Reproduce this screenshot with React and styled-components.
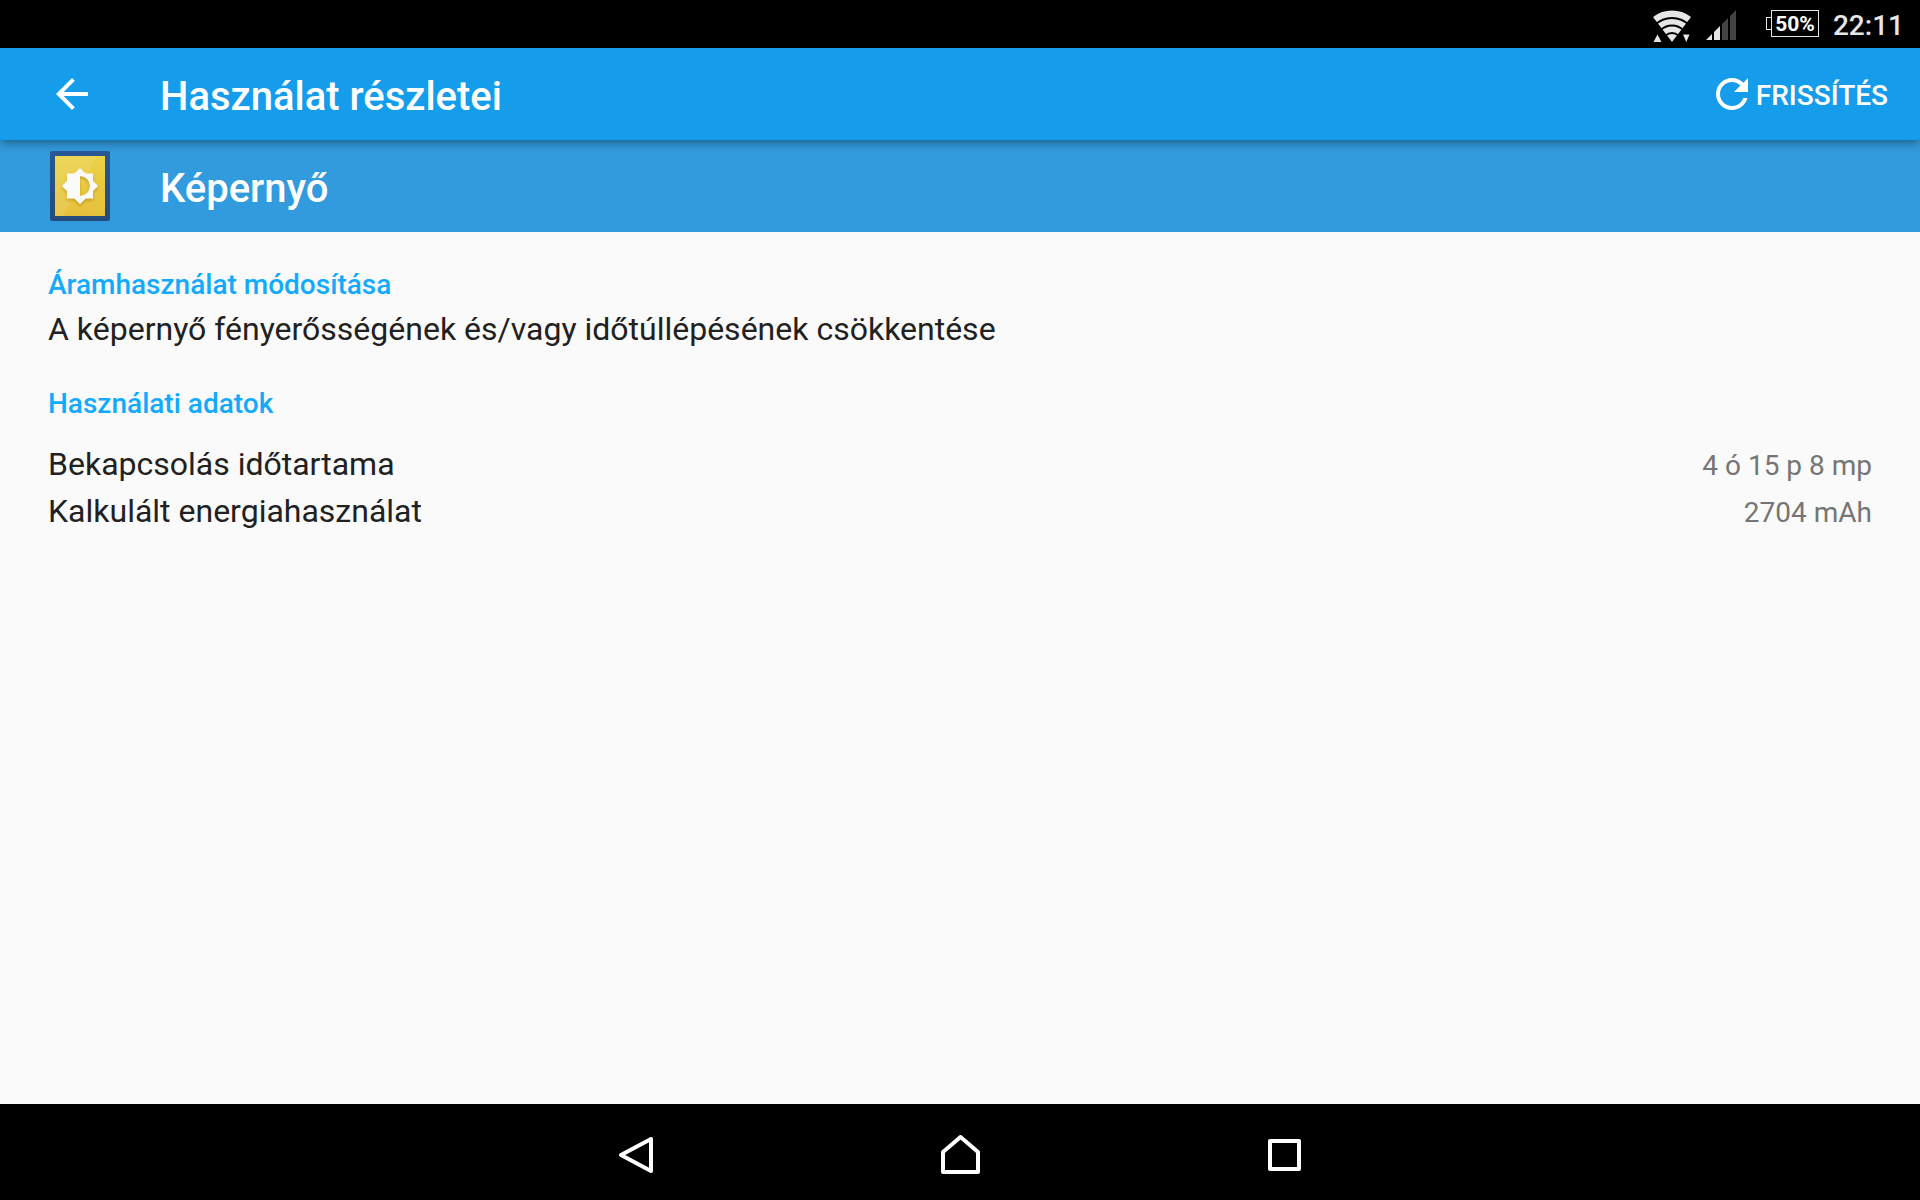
import styled, { createGlobalStyle } from "styled-components";

const GlobalStyle = createGlobalStyle`
  * {
    box-sizing: border-box;
  }
  body {
    margin: 0;
    background-color: #fafafa;
    font-family: Roboto, "Noto Sans", sans-serif;
  }
  h1, h2, h3, p, dl, dt, dd {
    margin: 0;
  }
`;

const Container = styled.div`
  display: flex;
  flex-direction: column;
  min-height: 100vh;
`;

const StatusBar = styled.div`
  display: flex;
  align-items: center;
  justify-content: flex-end;
  height: 48px;
  padding: 2px 16px 0 0;
  background-color: #000;
  color: #e6e6e6;
`;

const StatusIcon = styled.svg`
  display: block;
  margin-right: ${(props) => props.$gap}px;
`;

const Battery = styled.div`
  display: flex;
  align-items: center;
  margin: 0 14px 3px 0;
`;

const BatteryTip = styled.span`
  width: 5px;
  height: 13px;
  border: 1px solid #e6e6e6;
  border-right: none;
`;

const BatteryBody = styled.span`
  width: 48px;
  height: 27px;
  border: 1px solid #e6e6e6;
  color: #fff;
  font-size: 21px;
  font-weight: 700;
  line-height: 26px;
  text-align: center;
`;

const Clock = styled.time`
  padding-top: 2px;
  font-size: 28px;
  font-weight: 500;
  line-height: 32px;
`;

const AppBar = styled.header`
  position: relative;
  display: flex;
  align-items: center;
  height: 92px;
  padding: 0 32px 0 48px;
  background-color: #159dec;
  color: #fff;
  box-shadow: 0 2px 10px rgba(0, 0, 0, 0.45);
`;

const IconButton = styled.button`
  display: flex;
  align-items: center;
  justify-content: center;
  width: 48px;
  height: 48px;
  margin-right: 64px;
  padding: 0;
  border: none;
  background: none;
  color: inherit;
  cursor: pointer;
`;

const Title = styled.h1`
  flex: 1;
  padding-top: 6px;
  font-size: 40px;
  font-weight: 500;
  line-height: 48px;
`;

const RefreshButton = styled.button`
  display: flex;
  align-items: center;
  gap: 8px;
  padding: 0;
  border: none;
  background: none;
  color: inherit;
  font-family: inherit;
  font-size: 28px;
  font-weight: 500;
  line-height: 32px;
  cursor: pointer;
`;

const RefreshText = styled.span`
  padding-top: 4px;
`;

const Banner = styled.section`
  display: flex;
  align-items: center;
  gap: 50px;
  height: 92px;
  padding: 0 50px;
  background-color: #329bde;
  color: #fff;
`;

const BannerTitle = styled.h2`
  padding-top: 6px;
  font-size: 40px;
  font-weight: 500;
  line-height: 48px;
`;

const Content = styled.main`
  flex: 1;
  padding: 33px 48px;
`;

const Section = styled.section`
  margin-bottom: 31px;
`;

const SectionTitle = styled.h3`
  color: #12aaff;
  font-size: 28px;
  font-weight: 500;
  line-height: 40px;
`;

const Text = styled.p`
  color: #212121;
  font-size: 32px;
  line-height: 48px;
`;

const Details = styled.dl`
  padding-top: 17px;
`;

const Row = styled.div`
  display: flex;
  align-items: baseline;
  justify-content: space-between;
  line-height: 47px;
`;

const Label = styled.dt`
  color: #212121;
  font-size: 32px;
`;

const Value = styled.dd`
  color: #757575;
  font-size: 28px;
  line-height: 40px;
`;

const NavBar = styled.nav`
  display: flex;
  align-items: center;
  justify-content: center;
  gap: 228px;
  height: 96px;
  padding-top: 6px;
  background-color: #000;
`;

const NavButton = styled.button`
  display: flex;
  align-items: center;
  justify-content: center;
  width: 96px;
  height: 80px;
  padding: 0;
  border: none;
  background: none;
  cursor: pointer;
`;

const WifiIcon = () => (
  <StatusIcon $gap={14} width="40" height="34" viewBox="0 -2 40 34">
    <path d="M1 7A31.400 31.400 0 0 1 39 7L20 32Z" fill="#e6e6e6" />
    <g fill="none" stroke="#000" strokeWidth="2">
      <circle cx="20" cy="32" r="24" />
      <circle cx="20" cy="32" r="16.500" />
      <circle cx="20" cy="32" r="9" />
    </g>
    <path d="M1.500 32L5.500 24.500L9.500 32Z M31 24.500H37.500L34.300 32Z" fill="#e6e6e6" />
  </StatusIcon>
);

const SignalIcon = () => (
  <StatusIcon $gap={30} width="30" height="30" viewBox="0 0 30 30">
    <path d="M0 30L6 24V30Z M8 22L14 16V30H8Z" fill="#e6e6e6" />
    <path d="M16 14L22 8V30H16Z M24 6L30 0V30H24Z" fill="#444" />
  </StatusIcon>
);

const DisplayIcon = () => (
  <svg width="60" height="70" viewBox="0 0 60 70" aria-hidden="true">
    <defs>
      <linearGradient id="frame" x1="0" y1="0" x2="0" y2="1">
        <stop offset="0" stopColor="#275896" />
        <stop offset="1" stopColor="#264b7b" />
      </linearGradient>
      <linearGradient id="panel" x1="0" y1="0" x2="0" y2="1">
        <stop offset="0" stopColor="#ebd246" />
        <stop offset="1" stopColor="#e6c03c" />
      </linearGradient>
      <filter id="glow" x="-30%" y="-30%" width="160%" height="160%">
        <feDropShadow dx="0" dy="2" stdDeviation="1.5" floodColor="#a87800" floodOpacity="0.5" />
      </filter>
    </defs>
    <rect width="60" height="70" rx="2" fill="url(#frame)" />
    <rect x="5" y="5" width="50" height="60" fill="url(#panel)" />
    <path d="M5 5H47L13 65H5Z" fill="#fff" fillOpacity="0.1" />
    <path
      d="M30 17L35.500 22.500H43V30L48 35L43 40V47.500H35.500L30 53L24.500 47.500H17V40L12 35L17 30V22.500H24.500Z M30 25V45A10 10 0 0 0 30 25Z"
      fill="#fafafa"
      fillRule="evenodd"
      filter="url(#glow)"
    />
  </svg>
);

const details = [
  { label: "Bekapcsolás időtartama", value: "4 ó 15 p 8 mp" },
  { label: "Kalkulált energiahasználat", value: "2704 mAh" },
];

const navItems = [
  { label: "Vissza", path: "M35 4V36L5 20Z" },
  { label: "Kezdőképernyő", path: "M20.500 2L38 17V37H3V17Z" },
  { label: "Legutóbbi alkalmazások", path: "M6 6H35V34H6Z" },
];

const App = () => {
  return (
    <Container>
      <GlobalStyle />
      <StatusBar>
        <WifiIcon />
        <SignalIcon />
        <Battery>
          <BatteryTip />
          <BatteryBody>50%</BatteryBody>
        </Battery>
        <Clock>22:11</Clock>
      </StatusBar>
      <AppBar>
        <IconButton aria-label="Vissza">
          <svg width="48" height="48" viewBox="0 0 24 24" fill="currentColor">
            <path d="M20 11H7.830l5.590-5.590L12 4l-8 8 8 8 1.410-1.410L7.830 13H20v-2z" />
          </svg>
        </IconButton>
        <Title>Használat részletei</Title>
        <RefreshButton>
          <svg width="32" height="32" viewBox="4 4 16 16" fill="currentColor" aria-hidden="true">
            <path d="M17.650 6.350C16.200 4.900 14.210 4 12 4c-4.420 0-7.990 3.580-7.990 8s3.570 8 7.990 8c3.730 0 6.840-2.550 7.730-6h-2.080c-.82 2.330-3.040 4-5.650 4-3.310 0-6-2.690-6-6s2.690-6 6-6c1.660 0 3.140.69 4.220 1.780L13 11h7V4l-2.350 2.350z" />
          </svg>
          <RefreshText>FRISSÍTÉS</RefreshText>
        </RefreshButton>
      </AppBar>
      <Banner>
        <DisplayIcon />
        <BannerTitle>Képernyő</BannerTitle>
      </Banner>
      <Content>
        <Section>
          <SectionTitle>Áramhasználat módosítása</SectionTitle>
          <Text>A képernyő fényerősségének és/vagy időtúllépésének csökkentése</Text>
        </Section>
        <Section>
          <SectionTitle>Használati adatok</SectionTitle>
          <Details>
            {details.map((item) => (
              <Row key={item.label}>
                <Label>{item.label}</Label>
                <Value>{item.value}</Value>
              </Row>
            ))}
          </Details>
        </Section>
      </Content>
      <NavBar>
        {navItems.map((item) => (
          <NavButton key={item.label} aria-label={item.label}>
            <svg width="40" height="40" viewBox="0 0 40 40" fill="none" stroke="#fff" strokeWidth="4" strokeLinejoin="round">
              <path d={item.path} />
            </svg>
          </NavButton>
        ))}
      </NavBar>
    </Container>
  );
};

export default App;
